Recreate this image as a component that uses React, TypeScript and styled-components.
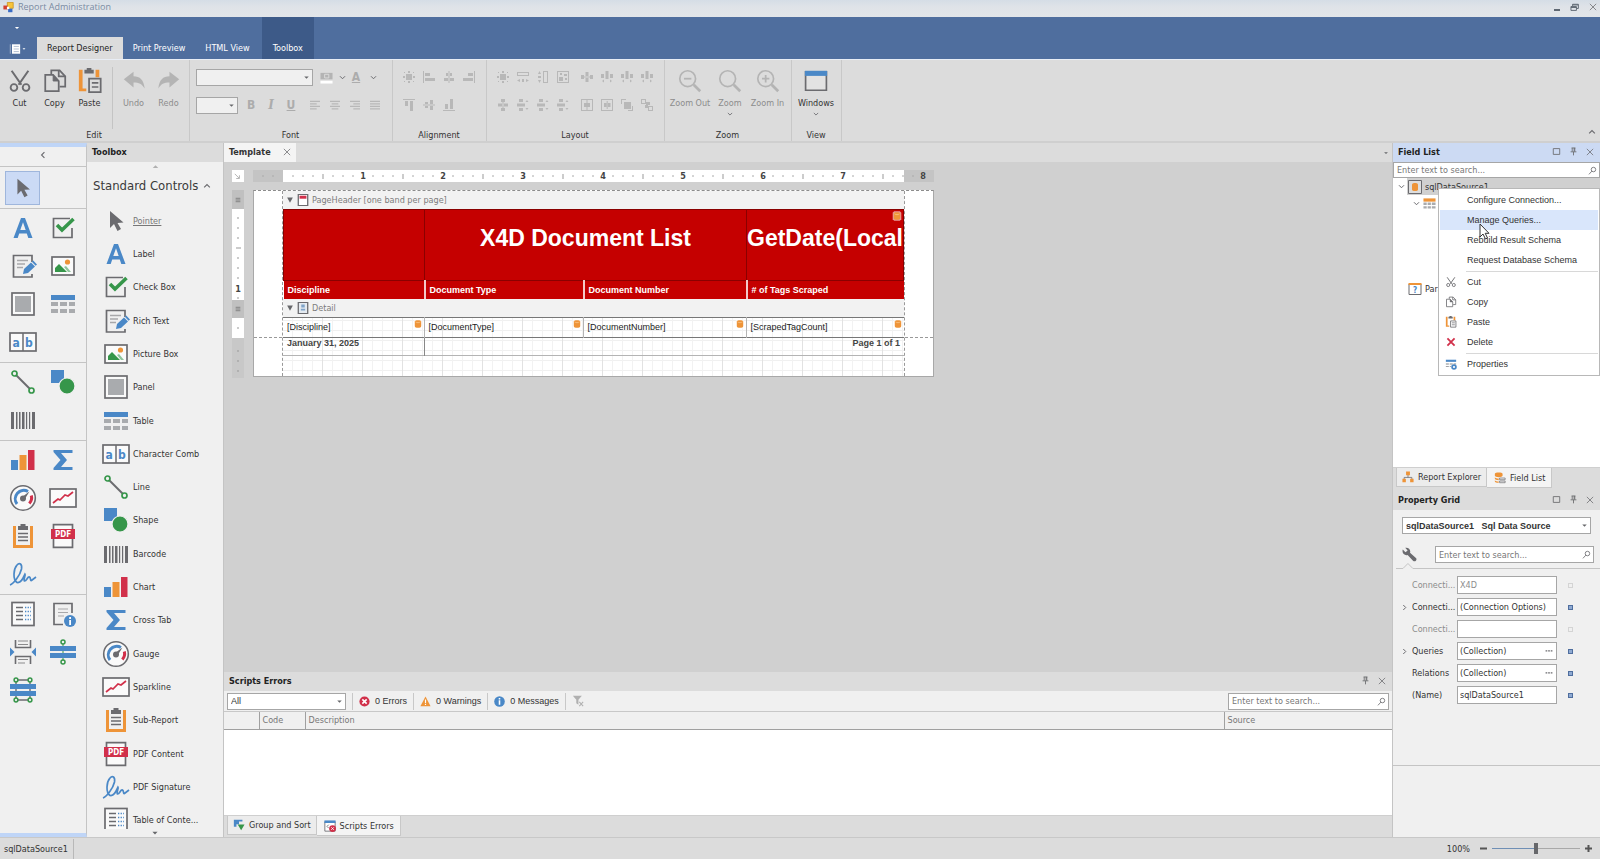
import React from 'react';
import styled, { createGlobalStyle, css } from 'styled-components';

const UI = `'DejaVu Sans Condensed', 'DejaVu Sans', sans-serif`;
const ARIAL = `'Liberation Sans', Arial, sans-serif`;
const GREY = '#6b6b6f';
const BLUE = '#4a88c7';
const GREEN = '#36964a';
const ORANGE = '#ee9438';
const RED = '#d1304a';

const Global = createGlobalStyle`
  *, *::before, *::after { box-sizing: border-box; }
  body { margin: 0; background: #dcdcdc; color: #333; font: 9px/12px ${UI}; overflow: hidden; }
  button, input, select { font: inherit; color: inherit; margin: 0; border-radius: 0; }
  button { background: none; border: 0; padding: 0; }
  svg { display: block; flex: none; }
  h1, h2, p { margin: 0; font: inherit; }
`;

/* ---------- icons ---------- */

const icons: Record<string, React.ReactNode> = {
  pointer: <path d="M8 4v17l4-4 3.500 7 3.500-2-3.500-6 6-.500z" fill={GREY} />,
  label: <path d="M4.500 24 12 4h4l7.500 20h-4.200l-1.500-4.500h-7.600L8.700 24zm6.800-8h5.400L14 8.200z" fill={BLUE} />,
  check: (
    <>
      <path d="M21 4.500H4.500v19H23V14" fill="none" stroke={GREY} strokeWidth="1.700" />
      <path d="m8 11 5 5L24.500 5" fill="none" stroke={GREEN} strokeWidth="3.600" />
    </>
  ),
  rich: (
    <>
      <path d="M23 10V3.500H4.500v21.500H23v-3" fill="none" stroke={GREY} strokeWidth="1.700" />
      <path d="M8 8.500h11M8 12h8M8 15.500h6" stroke="#a8a8aa" strokeWidth="1.300" />
      <path d="m14 22 1-5 7-6.500 4 4-7 6.500z" fill={BLUE} />
      <path d="m22.800 9.800 1.400-1.300 3.800 4-1.400 1.300z" fill={BLUE} />
    </>
  ),
  picture: (
    <>
      <rect x="3" y="5" width="22" height="18" fill="#fafafa" stroke={GREY} strokeWidth="1.700" />
      <path d="m6 20 0-4 4-4 8 8z" fill={GREEN} />
      <path d="m15 15 2-1 5 6h-3z" fill="#8dc49a" />
      <circle cx="18.500" cy="10" r="2.600" fill={ORANGE} />
    </>
  ),
  panel: (
    <>
      <rect x="3" y="3" width="22" height="22" fill="#fafafa" stroke={GREY} strokeWidth="1.700" />
      <rect x="6" y="6" width="16" height="16" fill="#a9abae" />
    </>
  ),
  table: (
    <>
      <path d="M2 5h24v5H2z" fill={BLUE} />
      <path d="M2 12h7v4H2zM11 12h7v4h-7zM20 12h6v4h-6zM2 19h7v4H2zM11 19h7v4h-7zM20 19h6v4h-6z" fill="#a9abae" />
    </>
  ),
  comb: (
    <>
      <rect x="1" y="5" width="26" height="18" fill="#fafafa" stroke={GREY} strokeWidth="1.700" />
      <path d="M14 5v18" stroke={GREY} strokeWidth="1.500" />
      <text x="3.500" y="19" fontSize="12" fontWeight="700" fontFamily={UI} fill={BLUE}>a</text>
      <text x="16" y="19" fontSize="12" fontWeight="700" fontFamily={UI} fill={BLUE}>b</text>
    </>
  ),
  line: (
    <>
      <path d="m6 6 16 16" stroke={GREY} strokeWidth="1.900" />
      <circle cx="5.500" cy="5.500" r="2.500" fill="#f0f0f0" stroke={GREEN} strokeWidth="1.700" />
      <circle cx="22.500" cy="22.500" r="2.500" fill="#f0f0f0" stroke={GREEN} strokeWidth="1.700" />
    </>
  ),
  shape: (
    <>
      <path d="M2 2h13v13H2z" fill={BLUE} />
      <circle cx="18" cy="18" r="8" fill={GREEN} stroke="#f0f0f0" strokeWidth="1.200" />
    </>
  ),
  barcode: <path d="M2 6h3v17H2zM7 6h1.500v17H7zM10 6h1.500v17H10zM13 6h2.500v17H13zM17 6h1.200v17H17zM20 6h1.200v17H20zM23 6h3v17h-3z" fill={GREY} />,
  chart: (
    <>
      <path d="M2 14h7v10H2z" fill={BLUE} />
      <path d="M10.500 9h7v15h-7z" fill={ORANGE} />
      <path d="M19 4h6.500v20H19z" fill={RED} />
    </>
  ),
  sigma: <path d="M4.500 4h19v3H12l6 7-6 7h11.500v3h-19v-2l7-8-7-8z" fill={BLUE} />,
  gauge: (
    <>
      <circle cx="14" cy="14" r="12.300" fill="#fafafa" stroke={GREY} strokeWidth="1.600" />
      <path d="M8 20a8.500 8.500 0 0 1 11-12.500" fill="none" stroke={BLUE} strokeWidth="3" />
      <path d="M22.300 11.500a8.500 8.500 0 0 1-2 8" fill="none" stroke={RED} strokeWidth="3" />
      <circle cx="14" cy="14.500" r="3" fill={GREY} />
      <path d="m13 13 7.500-5.500-5 8z" fill={GREY} />
    </>
  ),
  spark: (
    <>
      <rect x="1" y="5" width="26" height="18" fill="#fafafa" stroke={GREY} strokeWidth="1.700" />
      <path d="m4 19 5-4 2 1 5-5 3 1 5-4" fill="none" stroke={RED} strokeWidth="1.700" />
    </>
  ),
  sub: (
    <>
      <path d="M4 4h3v19h14V4h3v22H4z" fill={ORANGE} />
      <path d="M9 4h2.500V2h5v2H19v4H9z" fill={GREY} />
      <path d="M9 11.500h10M9 15h10M9 18.500h10" stroke={GREY} strokeWidth="1.400" />
    </>
  ),
  pdf: (
    <>
      <path d="M4.500 2.700h19v22.600h-19z" fill="#fafafa" stroke={GREY} strokeWidth="1.700" />
      <path d="M2 7h24v10H2z" fill={RED} />
      <text x="14" y="15" fontSize="8" fontWeight="700" fontFamily={UI} fill="#fff" textAnchor="middle">PDF</text>
    </>
  ),
  sign: <path d="M1 25c3-1 10-9 11.500-16 .8-5-2-7-4.500-4C4.500 9 3.500 19 8 22.500c4 1 6-4 8-8.500 1 1-2 6-.500 7 2 .500 3-5 5-4 1.500 1 .500 4 2 3.500L27 17" fill="none" stroke={BLUE} strokeWidth="1.700" />,
  toc: (
    <>
      <rect x="3" y="2.500" width="22" height="23" fill="#fafafa" stroke={GREY} strokeWidth="1.700" />
      <path d="M7 7.500h7M7 11.500h7M7 15.500h7M7 19.500h7" stroke={GREY} strokeWidth="1.600" />
      <path d="M16 7.500h6M16 11.500h6M16 15.500h6M16 19.500h6" stroke={BLUE} strokeWidth="1.300" strokeDasharray="1.300 1.300" />
    </>
  ),
  info: (
    <>
      <path d="M23 13V3.500H5v21h9" fill="none" stroke={GREY} strokeWidth="1.700" />
      <path d="M9 9h10M9 12.500h10M9 16h6" stroke="#a8a8aa" strokeWidth="1.200" />
      <circle cx="21" cy="21" r="6" fill={BLUE} />
      <path d="M20.200 17h1.800v2h-1.800zM20.200 20h1.800v5h-1.800z" fill="#fff" />
    </>
  ),
  pageBreak: (
    <>
      <path d="M6.500 2v7.500h15V2M6.500 26v-7.500h15V26" fill="none" stroke={GREY} strokeWidth="1.600" />
      <path d="M9 3h10M9 6.500h10M9 21.500h10M9 25h7" stroke="#8a8a8c" />
      <path d="m1 9.500 4.500 4.500L1 18.500zM27 9.500 22.500 14l4.500 4.500z" fill={BLUE} />
    </>
  ),
  crossLine: (
    <>
      <path d="M14 4v20" stroke={GREEN} />
      <path d="M1 8h26v5H1zM1 15h26v5H1z" fill={BLUE} />
      <circle cx="14" cy="4" r="2" fill="#f0f0f0" stroke={GREEN} strokeWidth="1.500" />
      <circle cx="14" cy="24" r="2" fill="#f0f0f0" stroke={GREEN} strokeWidth="1.500" />
    </>
  ),
  crossBox: (
    <>
      <path d="M7 4h14v20H7z" fill="none" stroke={GREY} strokeWidth="1.400" />
      <path d="M1 8h26v5H1zM1 15h26v5H1z" fill={BLUE} />
      {[[7, 4], [21, 4], [7, 24], [21, 24]].map(([x, y]) => (
        <circle key={`${x}-${y}`} cx={x} cy={y} r="1.900" fill="#f0f0f0" stroke={GREEN} strokeWidth="1.500" />
      ))}
    </>
  ),
  cut: (
    <>
      <path d="m5 3 10.500 15M23 3 12.500 18" stroke={GREY} strokeWidth="2.200" />
      <circle cx="7.500" cy="21" r="3.600" fill="none" stroke={GREY} strokeWidth="2" />
      <circle cx="20.500" cy="21" r="3.600" fill="none" stroke={GREY} strokeWidth="2" />
    </>
  ),
  copy: (
    <>
      <path d="M10 6.500V2.500h9L25 9v11h-6" fill="none" stroke={GREY} strokeWidth="1.900" />
      <path d="M18 2.500V9h7" fill="none" stroke={GREY} strokeWidth="1.900" />
      <path d="M3.500 7.500h8.500l6 6.500v11H3.500z" fill="none" stroke={GREY} strokeWidth="1.900" />
      <path d="M12 7.500V14h6z" fill={GREY} stroke={GREY} />
    </>
  ),
  paste: (
    <>
      <path d="M2 2h4v20h4v3H2zM20 2h4v8h-4z" fill={ORANGE} />
      <path d="M8 2h2.500V0h5v2H18v4H8z" fill={GREY} />
      <path d="M13 11.500h12.500V26H13z" fill="none" stroke={GREY} strokeWidth="1.900" />
      <path d="M16 16h7M16 20.500h7" stroke={GREY} strokeWidth="1.700" />
    </>
  ),
  undo: <path d="M3 12 13.500 4v5c7 0 11 4 12 13-3-5-6-6.500-12-6.500V21z" fill="#b4b4b4" />,
  redo: <path d="M25 12 14.500 4v5c-7 0-11 4-12 13 3-5 6-6.500 12-6.500V21z" fill="#b4b4b4" />,
  zoomOut: <ZoomGlass inner="M7.500 11.500h8" />,
  zoom: <ZoomGlass />,
  zoomIn: <ZoomGlass inner="M7.500 11.500h8M11.500 7.500v8" />,
  windows: (
    <>
      <path d="M2.800 4h22.400v20H2.800z" fill="#e2e2e2" stroke={GREY} strokeWidth="1.800" />
      <path d="M2 3h24v5.500H2z" fill={BLUE} />
    </>
  ),
  wrench: <path d="M1.500 4.500 6.500 10l4-3.500L6 1.500C11.500 0 17 5 15 10.500L26.500 21c2 3.500-2 7.500-5.500 5L10.500 15C5 17-1 11 1.500 4.500z" fill={GREY} />,
  search: <path d="M17 4a7 7 0 1 1 0 14 7 7 0 1 1 0-14M12 16 3 26" fill="none" stroke={GREY} strokeWidth="2.600" />,
  error: (
    <>
      <circle cx="14" cy="14" r="13" fill={RED} />
      <path d="m8.500 8.500 11 11m0-11-11 11" stroke="#fff" strokeWidth="4" />
    </>
  ),
  warning: (
    <>
      <path d="m14 1 13 25H1z" fill={ORANGE} />
      <path d="M12.500 9h3v9h-3zM12.500 20h3v3h-3z" fill="#fff" />
    </>
  ),
  message: (
    <>
      <circle cx="14" cy="14" r="13.500" fill={BLUE} />
      <path d="M12 5h4v4h-4zM12 11h4v11h-4z" fill="#fff" />
    </>
  ),
  filter: (
    <>
      <path d="M2 2h21l-8 9v12l-5-4v-8z" fill="#b0b0b0" />
      <path d="m17 16 9 10m0-10-9 10" stroke="#b0b0b0" strokeWidth="2.400" />
    </>
  ),
  delete: <path d="m4 4 20 20M24 4 4 24" stroke={RED} strokeWidth="5" />,
  properties: (
    <>
      <path d="M2 4h24v5H2z" fill={BLUE} />
      <path d="M2 13h7v2H2zM11 13h7v2h-7zM20 13h6v2h-6zM2 19h7v2H2zM11 19h3v2h-3z" fill="#85878a" />
      <circle cx="21" cy="21" r="4.500" fill="none" stroke={BLUE} strokeWidth="4" />
    </>
  ),
  explorer: (
    <>
      <path d="M14 9v6M5 20v-5h18v5" fill="none" stroke={GREY} strokeWidth="1.800" />
      <path d="M9.500 1h9v9h-9zM1 18h8v8H1zM19 18h8v8h-8z" fill={ORANGE} />
    </>
  ),
  fields: (
    <>
      <path d="M2 4c0-4 18-4 18 0v5c0 4-18 4-18 0zM2 12c2 3 5 3 9 3v4c-5 0-9-1-9-3zM2 19c2 3 5 3 9 3v3c-5 0-9-1-9-3z" fill={ORANGE} />
      <path d="M13 14h13v4H13zM13 21h13v4H13z" fill="#f0f0f0" stroke={GREY} strokeWidth="1.600" />
    </>
  ),
  group: (
    <>
      <path d="M2 2h20v4h-8v6H8v6H2z" fill={BLUE} />
      <path d="M11 13h16l-8 13z" fill={GREEN} />
    </>
  ),
  scripts: (
    <>
      <path d="M2 4h24v22H2z" fill="#fff" stroke={GREY} strokeWidth="2" />
      <path d="M1 1h26v6H1z" fill={BLUE} />
      <path d="m11 11-4 4 4 4" fill="none" stroke={GREY} strokeWidth="2" />
      <circle cx="20" cy="20" r="8" fill={RED} />
      <path d="m17 17 6 6m0-6-6 6" stroke="#fff" strokeWidth="2" />
    </>
  ),
  database: (
    <>
      <path d="M1 1h26v26H1z" fill="#dedede" stroke={GREY} strokeWidth="2" />
      <path d="M8 9c0-4 12-4 12 0v10c0 4-12 4-12 0z" fill={ORANGE} />
    </>
  ),
  query: (
    <>
      <path d="M1 3h26v7H1z" fill={ORANGE} />
      <path d="M1 12h7v5H1zM10 12h7v5h-7zM19 12h8v5h-8zM1 20h7v5H1zM10 20h7v5h-7zM19 20h8v5h-8z" fill="#a9abae" />
    </>
  ),
  parameter: (
    <>
      <path d="M2 4h24v21H2z" fill="#fff" stroke={GREY} strokeWidth="2" />
      <path d="M1 2h26v4H1z" fill={ORANGE} />
      <text x="14" y="22" fontSize="16" fontWeight="700" fontFamily={UI} fill={BLUE} textAnchor="middle">?</text>
    </>
  ),
  pageHeader: (
    <>
      <path d="M3 1h22v26H3z" fill="#fff" stroke={GREY} strokeWidth="3" />
      <path d="M6 4h16v7H6z" fill={RED} />
    </>
  ),
  detail: (
    <>
      <path d="M3 1h22v26H3z" fill="#e4eaf0" stroke={GREY} strokeWidth="3" />
      <path d="M10 6h8v7h-8zM9 16h10v4H9z" fill="#7fa3c8" />
    </>
  ),
  field: (
    <>
      <path d="M6 1h16l4 4v18l-4 4H6l-4-4V5z" fill="#fff" opacity=".6" />
      <path d="M5 7c0-5 18-5 18 0v13c0 6-18 6-18 0z" fill={ORANGE} />
      <path d="M7 8c3 3 11 3 14 0" stroke="#fbc98f" strokeWidth="2" fill="none" />
    </>
  ),
  app: (
    <>
      <path d="M7 3h19v22H7z" fill="#fff" />
      <path d="M3 3v22M11 8h12M11 14h12M11 20h12" fill="none" stroke="#a9b6cc" strokeWidth="2" />
    </>
  ),
  appLogo: (
    <>
      <path d="M11 1h15v15H11z" fill="#f7c33a" stroke="#c9931c" strokeWidth="2" />
      <path d="M1 9h11v10H1z" fill="#d2402f" />
      <path d="M13 17h11v9H13z" fill="#3a6cc4" />
      <path d="M10 12h6v6h-6z" fill="#fff" />
    </>
  ),
  restore: <path d="M8 9V4h18v13h-5M3 11h17v12H3zM3 14h17M8 6h18" fill="none" stroke="#5f6873" strokeWidth="3" />,
  close: <path d="m3 3 22 22M25 3 3 25" stroke="#66676a" strokeWidth="2.600" />,
  maximize: <path d="M4 5h20v18H4z" fill="none" stroke="#66676a" strokeWidth="2.600" />,
  pin: <path d="M8 3h12M10 3v11M18 3v11M16 3v11M5 15h18M14 15v11" fill="none" stroke="#66676a" strokeWidth="2.600" />,
  down: <path d="M5 10h18l-9 9z" fill="#66676a" />,
  triangle: <path d="M4 5h20L14 24z" fill="#66676a" />,
  chevDown: <path d="m4 9 10 10L24 9" fill="none" stroke={GREY} strokeWidth="4" />,
  chevUp: <path d="m4 19 10-10 10 10" fill="none" stroke={GREY} strokeWidth="4" />,
  chevLeft: <path d="m19 4-10 10 10 10" fill="none" stroke={GREY} strokeWidth="4" />,
  chevRight: <path d="m9 4 10 10L9 24" fill="none" stroke={GREY} strokeWidth="4" />,
  arrowUp: <path d="M3 20h22L14 9z" fill="#b0b0b0" />,
  whiteDown: <path d="M4 9h20L14 19z" fill="#fff" />,
  more: <path d="M2 11h6v5H2zM11 11h6v5h-6zM20 11h6v5h-6z" fill={GREY} />,
  corner: <path d="m5 8 12 12M18 12v9H9" fill="none" stroke="#b0b0b0" strokeWidth="2.600" />,
  menu: <path d="M3 6h22M3 14h22M3 22h22" stroke="#7a7a7a" strokeWidth="4" />,
  fill: (
    <>
      <path d="M1 4h26v14H1z" fill="#b4b4b4" />
      <path d="M10 7h9v8h-9z" fill="none" stroke="#ddd" strokeWidth="2" />
      <path d="M1 21h26v6H1z" fill="#fff" />
    </>
  ),
  // small greyed-out alignment and layout glyphs on a 12-unit grid
  aGrid: <Faded d="M3 3h6v6H3zM5 0h2v2H5zM5 10h2v2H5zM0 5h2v2H0zM10 5h2v2h-2zM1 1h1v1H1zM10 1h1v1h-1zM1 10h1v1H1zM10 10h1v1h-1z" />,
  aLeft: <Faded d="M0 0h1v12H0zM2 2h5v3H2zM2 7h10v3H2z" />,
  aCenter: <Faded d="M5.500 0h1v12h-1zM3 2h6v3H3zM1 7h10v3H1z" />,
  aRight: <Faded d="M11 0h1v12h-1zM5 2h5v3H5zM0 7h10v3H0z" />,
  aTop: <Faded d="M0 0h12v1H0zM2 2h3v5H2zM7 2h3v10H7z" />,
  aMiddle: <Faded d="M0 5.500h12v1H0zM2 3h3v6H2zM7 1h3v10H7z" />,
  aBottom: <Faded d="M0 11h12v1H0zM2 5h3v5H2zM7 0h3v10H7z" />,
  lWidth: <Faded d="M0 1h12v4H0zM1 2v2h10V2zM3 8l-3 1.500L3 11zM9 8l3 1.500L9 11zM5 8h2v3H5z" />,
  lHeight: <Faded d="M6 0h5v12H6zM7 1v10h3V1zM1 3l1.500-3L4 3zM1 9l1.500 3L4 9zM1 5h3v2H1z" />,
  lBoth: <Faded d="M0 0h12v12H0zM1 1v10h10V1zM2 6h4v4H2zM3 2h2v2H3zM8 7h2v2H8zM7 3h3v2H7z" />,
  lHEqual: <Faded d="M0 4h3v4H0zM4.500 1h3v10h-3zM9 4h3v4H9zM3 5.500h6v1H3z" />,
  lHArrow: <Faded d="M0 3h3v4H0zM4.500 0h3v8h-3zM9 3h3v4H9zM1 10l2-1.500v3zM11 10 9 8.500v3z" />,
  lVEqual: <Faded d="M4 0h4v3H4zM1 4.500h10v3H1zM4 9h4v3H4zM5.500 3h1v6h-1z" />,
  lVArrow: <Faded d="M2 0h4v3H2zM0 4.500h8v3H0zM2 9h4v3H2zM10 1l1.500 2h-3zM10 11 8.500 9h3z" />,
  lBoxH: <Faded d="M0 0h12v12H0zM1 1v10h10V1zM3 4h6v4H3zM5.500 1h1v3h-1zM5.500 8h1v3h-1z" />,
  lBoxV: <Faded d="M0 0h12v12H0zM1 1v10h10V1zM3 4h2.500v4H3zM7 4h2.500v4H7zM5.700 2h1v8h-1z" />,
  lFront: <Faded d="M3 3h7v7H3zM0 0h5v1H1v4H0zM12 12H7v-1h4V7h1z" />,
  lBack: <Faded d="M0 0h5v5H0zM1 1v3h3V1zM7 7h5v5H7zM8 8v3h3V8zM5 3h4v3H7v3H4V6h1z" />,
  tAlign: <Faded d="M0 1h12v1.300H0zM0 4h8v1.300H0zM0 7h12v1.300H0zM0 10h8v1.300H0z" />,
  tCenter: <Faded d="M0 1h12v1.300H0zM2 4h8v1.300H2zM0 7h12v1.300H0zM2 10h8v1.300H2z" />,
  tRight: <Faded d="M0 1h12v1.300H0zM4 4h8v1.300H4zM0 7h12v1.300H0zM4 10h8v1.300H4z" />,
  tJustify: <Faded d="M0 1h12v1.300H0zM0 4h12v1.300H0zM0 7h12v1.300H0zM0 10h12v1.300H0z" />,
};

function ZoomGlass({ inner }: { inner?: string }) {
  return (
    <g fill="none" stroke="#b4b4b4">
      <circle cx="11.500" cy="11.500" r="8.500" strokeWidth="1.800" />
      <path d="m18 18 7 7" strokeWidth="3" />
      {inner && <path d={inner} strokeWidth="1.900" />}
    </g>
  );
}

function Faded({ d }: { d: string }) {
  return <path d={d} transform="scale(2.333)" fill="#b8b8b8" fillRule="evenodd" />;
}

const Icon = ({ name, size = 28 }: { name: string; size?: number }) => (
  <svg width={size} height={size} viewBox="0 0 28 28" aria-hidden="true">
    {icons[name]}
  </svg>
);

/* ---------- window chrome ---------- */

const Window = styled.div`
  display: flex;
  flex-direction: column;
  height: 100vh;
  min-width: 1100px;
`;

const TitleBar = styled.header`
  display: flex;
  align-items: center;
  gap: 4px;
  height: 17px;
  padding: 0 3px 3px;
  background: linear-gradient(#d5dde6, #dfe3e8 40%, #e2e5e9);
  color: #7a8ba3;
  font-family: 'Open Sans', sans-serif;
`;

const WindowButtons = styled.div`
  display: flex;
  align-items: center;
  gap: 10px;
  margin-left: auto;
`;

const Minimize = styled.button`
  width: 6px;
  height: 8px;
  border-bottom: 2px solid #5f6873;
`;

const RibbonTabs = styled.nav`
  display: flex;
  align-items: flex-end;
  height: 42px;
  background: #4f6e9e;
`;

const AppMenu = styled.div`
  display: flex;
  flex-direction: column;
  justify-content: space-between;
  height: 100%;
  width: 37px;
  padding: 5px 0 4px 9px;
`;

const AppButton = styled.button`
  display: flex;
  align-items: center;
  gap: 1px;
  height: 12px;
`;

const Tab = styled.button<{ $active?: boolean; $context?: boolean }>`
  height: 22px;
  padding: 0 10px;
  color: #fff;
  ${(p) => p.$active && css`background: #dcdcdc; color: #222;`}
  ${(p) => p.$context && css`height: 42px; padding: 20px 11px 0; margin-left: 2px; background: #3d5a88;`}
`;

const Ribbon = styled.section`
  display: flex;
  height: 84px;
  background: #dcdcdc;
  border-top: 1px solid #e8edf5;
  border-bottom: 2px solid #cfcfcf;
`;

const RibbonGroup = styled.div`
  display: flex;
  flex-direction: column;
  justify-content: space-between;
  padding: 7px 3px 0 2px;
  border-right: 1px solid #c8c8c8;
`;

const GroupCaption = styled.p`
  text-align: center;
`;

const GroupBody = styled.div`
  display: flex;
`;

const Divider = styled.span`
  width: 1px;
  height: 62px;
  margin: 0 3px 0 5px;
  background: #c4c4c4;
`;

const BigButton = styled.button<{ $width?: number }>`
  display: flex;
  flex-direction: column;
  align-items: center;
  width: ${(p) => p.$width ?? 35}px;
  height: 54px;
  padding-top: 1px;
  & > span { margin: 3px 0 2px; }
  &:disabled { color: #8c8c8c; }
`;

const ToolGrid = styled.div`
  display: flex;
  flex-direction: column;
  gap: 8px;
  padding: 0 4px;
`;

const ToolRow = styled.div`
  display: flex;
  align-items: center;
  height: 20px;
`;

const Tool = styled.button<{ $mark?: 'b' | 'i' | 'u' | 'a' }>`
  display: grid;
  place-items: center;
  width: 20px;
  height: 20px;
  color: #acacac;
  font-size: 12px;
  ${(p) => p.$mark && css`font-weight: 700;`}
  ${(p) => p.$mark === 'i' && css`font-style: italic; font-family: 'DejaVu Serif', serif;`}
  ${(p) => (p.$mark === 'u' || p.$mark === 'a') && css`text-decoration: underline;`}
`;

const Spacer = styled.span<{ $width?: number }>`
  flex: none;
  width: ${(p) => p.$width ?? 4}px;
`;

const RibbonEnd = styled.div`
  display: flex;
  flex: 1;
  align-items: flex-end;
  justify-content: flex-end;
  padding: 5px 4px;
`;

/* ---------- shared controls ---------- */

const SelectBox = styled.div<{ $width?: number; $disabled?: boolean }>`
  position: relative;
  width: ${(p) => (p.$width ? `${p.$width}px` : 'auto')};
  height: 17px;
  & > select {
    display: block;
    appearance: none;
    width: 100%;
    height: 100%;
    padding: 0 3px;
    border: 1px solid #a6a6a6;
    background: ${(p) => (p.$disabled ? '#f0f0f0' : '#fff')};
    opacity: 1;
  }
  & > svg { position: absolute; right: 3px; top: 5px; }
`;

const SearchBox = styled.label<{ $tall?: boolean }>`
  display: flex;
  align-items: center;
  height: ${(p) => (p.$tall ? 17 : 16)}px;
  padding: 0 2px;
  border: 1px solid #a6a6a6;
  background: #fff;
  & > input {
    flex: 1;
    min-width: 0;
    padding: 0 1px;
    border: 0;
    outline: 0;
    background: none;
  }
  & > input::placeholder { color: #777; opacity: 1; }
`;

const Search = ({ label, tall }: { label: string; tall?: boolean }) => (
  <SearchBox $tall={tall}>
    <input placeholder="Enter text to search..." aria-label={label} />
    <Icon name="search" size={9} />
  </SearchBox>
);

const PanelHeader = styled.header<{ $active?: boolean }>`
  display: flex;
  align-items: center;
  flex: none;
  gap: 8px;
  height: 19px;
  padding: 0 6px 2px 5px;
  background: ${(p) => (p.$active ? '#ccdaf3' : '#dcdcdc')};
  color: #222;
  & > h2 { flex: 1; font-weight: 700; }
`;

const IconButton = styled.button`
  display: grid;
  place-items: center;
`;

const BottomTabs = styled.div<{ $tall?: boolean }>`
  display: flex;
  flex: none;
  height: ${(p) => (p.$tall ? 24 : 22)}px;
  padding: 0 3px;
  background: #dcdcdc;
  border-top: 1px solid #cfcfcf;
`;

const BottomTab = styled.button<{ $active?: boolean }>`
  display: flex;
  align-items: center;
  gap: 4px;
  height: ${(p) => (p.$active ? 20 : 19)}px;
  padding: ${(p) => (p.$active ? '0 6px 0 7px' : '0 5px')};
  background: ${(p) => (p.$active ? '#f4f4f4' : '#ececec')};
  border: 1px solid #c8c8c8;
  border-top: 0;
  border-left-width: ${(p) => (p.$active ? 0 : 1)}px;
`;

/* ---------- main areas ---------- */

const Body = styled.main`
  display: grid;
  flex: 1;
  min-height: 0;
  grid-template-columns: 87px 137px minmax(0, 1fr) 207px;
`;

const Strip = styled.aside`
  display: flex;
  flex-direction: column;
  background: #f0f0f0;
  border-top: 4px solid #bfd5f7;
  border-bottom: 4px solid #bfd5f7;
  border-right: 1px solid #c4c4c4;
`;

const StripToggle = styled.button`
  display: grid;
  place-items: center;
  height: 20px;
  padding-bottom: 4px;
  border-bottom: 1px solid #c4c4c4;
`;

const StripGroup = styled.div<{ $first?: boolean; $last?: boolean }>`
  display: grid;
  grid-template-columns: 40px 40px;
  grid-auto-rows: ${(p) => (p.$first ? 40 : 38)}px;
  padding: ${(p) => (p.$first ? '1px 3px 0' : '0 3px 1px')};
  border-bottom: ${(p) => (p.$last ? 0 : '1px solid #c4c4c4')};
`;

const StripButton = styled.button<{ $selected?: boolean }>`
  display: grid;
  place-items: center;
  ${(p) => p.$selected && css`
    align-self: center;
    margin: 0 3px 0 2px;
    height: 34px;
    background: #cbdaf5;
    border: 1px solid #9fb6dc;
  `}
`;

const ToolboxPanel = styled.aside`
  display: flex;
  flex-direction: column;
  min-height: 0;
  background: #f0f0f0;
  border-right: 1px solid #c4c4c4;
`;

const ScrollHint = styled.div<{ $bottom?: boolean }>`
  display: grid;
  place-items: center;
  flex: none;
  position: relative;
  height: 8px;
  margin-top: ${(p) => (p.$bottom ? -8 : 0)}px;
  background: #f0f0f0;
`;

const CategoryTitle = styled.button`
  display: flex;
  align-items: center;
  justify-content: space-between;
  flex: none;
  height: 34px;
  padding: 0 12px 3px 6px;
  color: #3a3a3a;
  font-size: 13px;
  line-height: 20px;
  white-space: nowrap;
`;

const ToolList = styled.ul`
  display: grid;
  flex: 1;
  grid-auto-rows: 1fr;
  min-height: 0;
  margin: 0;
  padding: 0;
  list-style: none;
`;

const ToolItem = styled.button<{ $current?: boolean }>`
  display: flex;
  align-items: center;
  gap: 3px;
  width: 100%;
  height: 100%;
  padding: 0 15px;
  ${(p) => p.$current && css`color: #777; text-decoration: underline;`}
`;

const Center = styled.section`
  display: flex;
  flex-direction: column;
  min-width: 0;
  min-height: 0;
  background: #d0d0d0;
  border-right: 1px solid #c4c4c4;
`;

const DocumentTabs = styled.div`
  display: flex;
  align-items: center;
  justify-content: space-between;
  flex: none;
  height: 19px;
  padding-right: 3px;
  background: #dcdcdc;
`;

const DocumentTab = styled.div`
  display: flex;
  align-items: center;
  gap: 9px;
  height: 19px;
  padding: 0 5px 2px;
  background: #f4f4f4;
  font-weight: 700;
  & > span { width: 45px; }
`;

const Designer = styled.div`
  display: grid;
  flex: 1;
  grid-template-columns: 13px 681px;
  grid-template-rows: 12px auto;
  gap: 8px;
  align-content: start;
  min-height: 0;
  padding: 8px 0 0 8px;
  overflow: hidden;
`;

const RulerCorner = styled.button`
  display: grid;
  place-items: center;
  width: 12px;
  height: 12px;
  background: #fff;
`;

const VerticalRuler = styled.div`
  display: flex;
  flex-direction: column;
`;

const RulerPart = styled.div<{ $height: number; $scale?: boolean; $cap?: boolean }>`
  display: grid;
  place-items: center;
  width: 12px;
  height: ${(p) => p.$height}px;
  background: ${(p) => (p.$scale ? '#fff' : p.$cap ? '#c0c0c0' : '#c8c8c8')};
`;

const Page = styled.article`
  display: grid;
  grid-template-columns: 28px 623px 1fr;
  height: 187px;
  background: #fff;
  border: 1px solid #a8a8a8;
  border-top-style: dashed;
  border-top-color: #8c8c8c;
`;

const Margin = styled.div`
  display: flex;
  flex-direction: column;
  &::before { content: ''; height: 147px; border-bottom: 1px dashed #999; }
`;

const Bands = styled.div`
  border-left: 1px dashed #999;
  border-right: 1px dashed #999;
  background:
    repeating-linear-gradient(90deg, transparent 0 39px, #e2e2e2 39px 40px),
    repeating-linear-gradient(90deg, transparent 0 9px, #f2f2f2 9px 10px),
    repeating-linear-gradient(transparent 0 9px, #f0f0f0 9px 10px);
`;

const BandHeader = styled.header`
  display: flex;
  align-items: center;
  gap: 3px;
  height: 18px;
  padding: 0 3px;
  background: #f2f2f2;
  color: #7c7c7c;
`;

const ReportTable = styled.table`
  width: 621px;
  table-layout: fixed;
  border-collapse: collapse;
  font-family: ${ARIAL};
`;

const ReportRow = styled.tr<{ $height: number; $kind: 'title' | 'head' | 'data' | 'foot' }>`
  height: ${(p) => p.$height}px;
  & > * { position: relative; padding: 0 4px; text-align: left; white-space: nowrap; overflow: hidden; }
  ${(p) => p.$kind === 'title' && css`
    background: #c50000;
    color: #fff;
    & > * { padding: 0 0 14px; font-size: 23px; line-height: 26px; text-align: center; border: 1px solid #8a0000; }
  `}
  ${(p) => p.$kind === 'head' && css`
    background: #c50000;
    color: #fff;
    & > * + * { border-left: 2px solid #f3c9c9; }
  `}
  ${(p) => p.$kind === 'data' && css`
    color: #222;
    border-top: 1px solid #777;
    border-bottom: 1px solid #777;
    & > * + * { border-left: 1px solid #b4b4b4; }
  `}
  ${(p) => p.$kind === 'foot' && css`
    color: #444;
    font-weight: 700;
    line-height: 10px;
    border-bottom: 1px solid #b4b4b4;
    & > * { vertical-align: top; }
    & > * + * { border-left: 1px solid #888; text-align: right; }
  `}
`;

const FieldBadge = styled.span`
  position: absolute;
  top: 1px;
  right: 1px;
`;

/* ---------- script errors ---------- */

const ErrorsPanel = styled.section`
  display: flex;
  flex-direction: column;
  flex: none;
  height: 165px;
`;

const ErrorsBar = styled.div`
  display: flex;
  align-items: center;
  flex: none;
  height: 21px;
  padding: 0 3px;
  background: #f0f0f0;
  border-bottom: 1px solid #c8c8c8;
  font-family: ${ARIAL};
  & > label { width: 161px; margin-left: auto; font-family: ${UI}; }
`;

const Counter = styled.button`
  display: flex;
  align-items: center;
  gap: 5px;
  height: 17px;
  padding: 0 6px;
  border-left: 1px solid #c8c8c8;
  &:first-of-type { margin-left: 6px; }
`;

const ErrorsBody = styled.div`
  flex: 1;
  background: #fff;
`;

const ErrorsTable = styled.table`
  width: 100%;
  table-layout: fixed;
  border-collapse: collapse;
  & th {
    height: 17px;
    padding: 0 3px;
    background: #f0f0f0;
    border-bottom: 1px solid #a0a0a0;
    color: #777;
    font-weight: 400;
    text-align: left;
  }
  & th + th { border-left: 1px solid #a0a0a0; }
`;

/* ---------- right side ---------- */

const Side = styled.aside`
  display: flex;
  flex-direction: column;
  position: relative;
  min-height: 0;
  background: #f0f0f0;
`;

const FieldList = styled.section`
  display: flex;
  flex-direction: column;
  flex: none;
  height: 324px;
  background: #fff;
`;

const Tree = styled.ul`
  margin: 0;
  padding: 0;
  list-style: none;
`;

const TreeItem = styled.li<{ $level: number; $selected?: boolean }>`
  display: flex;
  align-items: center;
  gap: 3px;
  height: 17px;
  padding-left: ${(p) => 5 + p.$level * 15}px;
  ${(p) => p.$selected && css`background: linear-gradient(90deg, #fff 14px, #d0d0d0 14px);`}
`;

const Menu = styled.menu`
  position: absolute;
  top: 45px;
  left: 45px;
  right: 0;
  margin: 0;
  padding: 1px;
  background: #fff;
  border: 1px solid #b8b8b8;
  font-family: ${ARIAL};
`;

const MenuItem = styled.button<{ $hover?: boolean }>`
  display: grid;
  grid-template-columns: 27px 1fr;
  align-items: center;
  width: 100%;
  height: 20px;
  text-align: left;
  background: ${(p) => (p.$hover ? '#d9e6fb' : 'none')};
  & > svg { justify-self: center; margin-right: 5px; }
  & > span { grid-column: 2; }
`;

const MenuRule = styled.hr`
  height: 1px;
  margin: 1px 0 0 26px;
  border: 0;
  background: #d8d8d8;
`;

const Cursor = styled.svg`
  position: absolute;
  top: 80px;
  left: 86px;
`;

const PropertyPanel = styled.section`
  display: flex;
  flex: 1;
  flex-direction: column;
`;

const PropertyTop = styled.div`
  display: flex;
  flex-direction: column;
  gap: 12px;
  padding: 7px 9px 5px;
  & select { font-family: ${ARIAL}; font-weight: 700; }
`;

const PropertySearch = styled.div`
  display: grid;
  grid-template-columns: 33px 1fr;
  align-items: center;
  margin-right: -3px;
`;

const Notch = styled.svg`
  width: 100%;
  height: 6px;
  margin-top: -5px;
`;

const PropertyList = styled.div`
  display: flex;
  flex: none;
  flex-direction: column;
  gap: 4px;
  height: 197px;
  padding-top: 7px;
  border-bottom: 1px solid #c4c4c4;
`;

const PropertyRow = styled.div<{ $off?: boolean }>`
  display: grid;
  grid-template-columns: 17px 43px 100px 1fr;
  align-items: center;
  gap: 0 2px;
  height: 18px;
  color: ${(p) => (p.$off ? '#8c8c8c' : '#333')};
  & > label { grid-column: 2; overflow: hidden; white-space: nowrap; }
  & > button:first-child { justify-self: end; margin-right: 2px; }
`;

const PropertyValue = styled.div`
  display: flex;
  align-items: center;
  height: 18px;
  padding-right: 3px;
  border: 1px solid #a6a6a6;
  background: #fff;
  & > input { flex: 1; min-width: 0; padding: 0 2px; border: 0; background: none; }
`;

const Marker = styled.span<{ $off?: boolean }>`
  width: 5px;
  height: 5px;
  margin-left: 9px;
  border: 1px solid ${(p) => (p.$off ? '#d4d4d4' : '#4f6e9e')};
  background: ${(p) => (p.$off ? 'none' : '#8faad2')};
`;

const StatusBar = styled.footer`
  display: flex;
  align-items: center;
  flex: none;
  height: 22px;
  border-top: 1px solid #c8c8c8;
  background: #dcdcdc;
  & > p { padding: 4px 5px 4px 4px; border-right: 1px solid #b8b8b8; }
`;

const ZoomBar = styled.div`
  display: flex;
  align-items: center;
  gap: 5px;
  margin-left: auto;
  padding-right: 8px;
  & > output { margin-right: 5px; }
`;

const ZoomStep = styled.button`
  display: grid;
  place-items: center;
`;

const Slider = styled.input`
  appearance: none;
  width: 88px;
  height: 12px;
  background: linear-gradient(90deg, #6f8fb5 50%, #a8a8a8 50%) center / 100% 1px no-repeat;
  &::-webkit-slider-thumb { appearance: none; width: 4px; height: 11px; background: #66676a; }
`;

/* ---------- data ---------- */

const stripGroups = [
  ['label', 'check', 'rich', 'picture', 'panel', 'table', 'comb'],
  ['line', 'shape', 'barcode'],
  ['chart', 'sigma', 'gauge', 'spark', 'sub', 'pdf', 'sign'],
  ['toc', 'info', 'pageBreak', 'crossLine', 'crossBox'],
];

const tools = [
  ['pointer', 'Pointer'], ['label', 'Label'], ['check', 'Check Box'], ['rich', 'Rich Text'],
  ['picture', 'Picture Box'], ['panel', 'Panel'], ['table', 'Table'], ['comb', 'Character Comb'],
  ['line', 'Line'], ['shape', 'Shape'], ['barcode', 'Barcode'], ['chart', 'Chart'],
  ['sigma', 'Cross Tab'], ['gauge', 'Gauge'], ['spark', 'Sparkline'], ['sub', 'Sub-Report'],
  ['pdf', 'PDF Content'], ['sign', 'PDF Signature'], ['toc', 'Table of Conte...'],
];

const alignRows = [['aGrid', 'aLeft', 'aCenter', 'aRight'], ['aTop', 'aMiddle', 'aBottom']];
const layoutRows = [
  ['aGrid', 'lWidth', 'lHeight', 'lBoth', '', 'lHEqual', 'lHArrow', 'lHArrow', 'lHArrow'],
  ['lVEqual', 'lVArrow', 'lVArrow', 'lVArrow', '', 'lBoxH', 'lBoxV', 'lFront', 'lBack'],
];

const properties = [
  { id: 'p1', label: 'Connecti...', value: 'X4D', off: true },
  { id: 'p2', label: 'Connecti...', value: '(Connection Options)', expand: true },
  { id: 'p3', label: 'Connecti...', value: '', off: true },
  { id: 'p4', label: 'Queries', value: '(Collection)', expand: true, more: true },
  { id: 'p5', label: 'Relations', value: '(Collection)', more: true },
  { id: 'p6', label: '(Name)', value: 'sqlDataSource1' },
];

const Column = styled.col<{ $width?: number }>`
  width: ${(p) => (p.$width ? `${p.$width}px` : 'auto')};
`;

const columns = (
  <colgroup>
    <Column $width={141} />
    <Column $width={159} />
    <Column $width={163} />
    <Column />
  </colgroup>
);

const IconTools = ({ rows }: { rows: string[][] }) => (
  <ToolGrid>
    {rows.map((row, r) => (
      <ToolRow key={r}>
        {row.map((name, i) => (name
          ? <Tool key={i} disabled aria-label={name}><Icon name={name} size={12} /></Tool>
          : <Spacer key={i} />))}
      </ToolRow>
    ))}
  </ToolGrid>
);

const HorizontalRuler = () => (
  <svg width="681" height="12" viewBox="0 0 681 12" fontFamily={UI} fontSize="9" fontWeight="700" textAnchor="middle">
    <path d="M0 0h30v12H0zM651 0h30v12h-30z" fill="#c4c4c4" />
    <path d="M30 0h621v12H30z" fill="#fff" />
    {Array.from({ length: 67 }, (_, i) => i - 2).map((i) => {
      const x = 30 + i * 10;
      if (i === 0) return null;
      if (i > 0 && i % 8 === 0) return <text key={i} x={x} y="9" fill="#444">{i / 8}</text>;
      return i > 0 && i % 4 === 0
        ? <path key={i} d={`M${x} 4v5`} stroke="#999" />
        : <path key={i} d={`M${x - 1} 6h2`} stroke="#aaa" />;
    })}
  </svg>
);

const Ticks = ({ count, first = 9 }: { count: number; first?: number }) => (
  <svg width="12" height={count * 10} viewBox={`0 0 12 ${count * 10}`} fontFamily={UI} fontSize="9" fontWeight="700" textAnchor="middle">
    {Array.from({ length: count }, (_, i) => {
      const y = first + i * 10 - 1;
      if (i === 7) return <text key={i} x="6" y={y + 4} fill="#444">1</text>;
      return <path key={i} d={i === 3 ? `M4 ${y}h5` : `M5 ${y}h2`} stroke="#999" />;
    })}
  </svg>
);

/* ---------- app ---------- */

export default function App() {
  return (
    <Window>
      <Global />
      <TitleBar>
        <Icon name="appLogo" size={11} />
        <h1>Report Administration</h1>
        <WindowButtons>
          <Minimize aria-label="Minimize" />
          <IconButton aria-label="Restore"><Icon name="restore" size={9} /></IconButton>
          <IconButton aria-label="Close"><Icon name="close" size={8} /></IconButton>
        </WindowButtons>
      </TitleBar>

      <RibbonTabs>
        <AppMenu>
          <AppButton aria-label="Customize quick access">
            <Spacer /><Icon name="whiteDown" size={6} />
          </AppButton>
          <AppButton aria-label="File">
            <Icon name="app" size={12} /><Icon name="whiteDown" size={4} />
          </AppButton>
        </AppMenu>
        <Tab $active>Report Designer</Tab>
        <Tab>Print Preview</Tab>
        <Tab>HTML View</Tab>
        <Tab $context>Toolbox</Tab>
      </RibbonTabs>

      <Ribbon>
        <RibbonGroup>
          <GroupBody>
            <BigButton><Icon name="cut" size={26} /><span>Cut</span></BigButton>
            <BigButton><Icon name="copy" size={26} /><span>Copy</span></BigButton>
            <BigButton><Icon name="paste" size={26} /><span>Paste</span></BigButton>
            <Divider />
            <BigButton disabled><Icon name="undo" size={26} /><span>Undo</span></BigButton>
            <BigButton disabled><Icon name="redo" size={26} /><span>Redo</span></BigButton>
          </GroupBody>
          <GroupCaption>Edit</GroupCaption>
        </RibbonGroup>
        <RibbonGroup>
          <ToolGrid>
            <ToolRow>
              <SelectBox $width={117} $disabled>
                <select disabled aria-label="Font name" />
                <Icon name="down" size={7} />
              </SelectBox>
              <Spacer $width={3} />
              <Tool disabled aria-label="Fill colour"><Icon name="fill" size={13} /></Tool>
              <Spacer $width={3} />
              <Icon name="chevDown" size={7} />
              <Tool disabled $mark="a">A</Tool>
              <Spacer />
              <Icon name="chevDown" size={7} />
            </ToolRow>
            <ToolRow>
              <SelectBox $width={42} $disabled>
                <select disabled aria-label="Font size" />
                <Icon name="down" size={7} />
              </SelectBox>
              <Spacer $width={3} />
              <Tool disabled $mark="b">B</Tool>
              <Tool disabled $mark="i">I</Tool>
              <Tool disabled $mark="u">U</Tool>
              <Spacer />
              <Tool disabled aria-label="Left"><Icon name="tAlign" size={10} /></Tool>
              <Tool disabled aria-label="Center"><Icon name="tCenter" size={10} /></Tool>
              <Tool disabled aria-label="Right"><Icon name="tRight" size={10} /></Tool>
              <Tool disabled aria-label="Justify"><Icon name="tJustify" size={10} /></Tool>
            </ToolRow>
          </ToolGrid>
          <GroupCaption>Font</GroupCaption>
        </RibbonGroup>
        <RibbonGroup>
          <IconTools rows={alignRows} />
          <GroupCaption>Alignment</GroupCaption>
        </RibbonGroup>
        <RibbonGroup>
          <IconTools rows={layoutRows} />
          <GroupCaption>Layout</GroupCaption>
        </RibbonGroup>
        <RibbonGroup>
          <GroupBody>
            <BigButton disabled $width={46}><Icon name="zoomOut" size={26} /><span>Zoom Out</span></BigButton>
            <BigButton disabled $width={34}><Icon name="zoom" size={26} /><span>Zoom</span><Icon name="chevDown" size={6} /></BigButton>
            <BigButton disabled $width={41}><Icon name="zoomIn" size={26} /><span>Zoom In</span></BigButton>
          </GroupBody>
          <GroupCaption>Zoom</GroupCaption>
        </RibbonGroup>
        <RibbonGroup>
          <BigButton $width={44}><Icon name="windows" size={26} /><span>Windows</span><Icon name="chevDown" size={6} /></BigButton>
          <GroupCaption>View</GroupCaption>
        </RibbonGroup>
        <RibbonEnd>
          <IconButton aria-label="Collapse ribbon"><Icon name="chevUp" size={8} /></IconButton>
        </RibbonEnd>
      </Ribbon>

      <Body>
        <Strip>
          <StripToggle aria-label="Collapse"><Icon name="chevLeft" size={8} /></StripToggle>
          <StripGroup $first>
            <StripButton $selected aria-label="Pointer"><Icon name="pointer" size={26} /></StripButton>
          </StripGroup>
          {stripGroups.map((group, g) => (
            <StripGroup key={g} $last={g === 3}>
              {group.map((name) => (
                <StripButton key={name} aria-label={name}><Icon name={name} /></StripButton>
              ))}
            </StripGroup>
          ))}
        </Strip>

        <ToolboxPanel>
          <PanelHeader><h2>Toolbox</h2></PanelHeader>
          <ScrollHint><Icon name="arrowUp" size={7} /></ScrollHint>
          <CategoryTitle><span>Standard Controls</span><Icon name="chevUp" size={8} /></CategoryTitle>
          <ToolList>
            {tools.map(([icon, label], i) => (
              <li key={label}>
                <ToolItem $current={i === 0}><Icon name={icon} />{label}</ToolItem>
              </li>
            ))}
          </ToolList>
          <ScrollHint $bottom><Icon name="down" size={8} /></ScrollHint>
        </ToolboxPanel>

        <Center>
          <DocumentTabs>
            <DocumentTab>
              <span>Template</span>
              <IconButton aria-label="Close template"><Icon name="close" size={8} /></IconButton>
            </DocumentTab>
            <IconButton aria-label="Open documents"><Icon name="down" size={6} /></IconButton>
          </DocumentTabs>
          <Designer>
            <RulerCorner aria-label="Select report"><Icon name="corner" size={10} /></RulerCorner>
            <HorizontalRuler />
            <VerticalRuler>
              <RulerPart $height={19} $cap><Icon name="menu" size={6} /></RulerPart>
              <RulerPart $height={91} $scale><Ticks count={9} /></RulerPart>
              <RulerPart $height={18} $cap><Icon name="menu" size={6} /></RulerPart>
              <RulerPart $height={20} $scale><Ticks count={1} first={6} /></RulerPart>
              <RulerPart $height={40}><Ticks count={3} /></RulerPart>
            </VerticalRuler>
            <Page>
              <Margin />
              <Bands>
                <BandHeader><Icon name="triangle" size={8} /><Icon name="pageHeader" size={12} />PageHeader [one band per page]</BandHeader>
                <ReportTable>
                  {columns}
                  <tbody>
                    <ReportRow $height={71} $kind="title">
                      <th /><th colSpan={2}>X4D Document List</th>
                      <th>GetDate(Local<FieldBadge><Icon name="field" size={10} /></FieldBadge></th>
                    </ReportRow>
                    <ReportRow $height={18} $kind="head">
                      <th>Discipline</th><th>Document Type</th><th>Document Number</th><th># of Tags Scraped</th>
                    </ReportRow>
                  </tbody>
                </ReportTable>
                <BandHeader><Icon name="triangle" size={8} /><Icon name="detail" size={12} />Detail</BandHeader>
                <ReportTable>
                  {columns}
                  <tbody>
                    <ReportRow $height={20} $kind="data">
                      {['[Discipline]', '[DocumentType]', '[DocumentNumber]', '[ScrapedTagCount]'].map((field) => (
                        <td key={field}>{field}<FieldBadge><Icon name="field" size={10} /></FieldBadge></td>
                      ))}
                    </ReportRow>
                    <ReportRow $height={18} $kind="foot">
                      <td>January 31, 2025</td><td colSpan={3}>Page 1 of 1</td>
                    </ReportRow>
                  </tbody>
                </ReportTable>
              </Bands>
              <Margin />
            </Page>
          </Designer>

          <ErrorsPanel>
            <PanelHeader>
              <h2>Scripts Errors</h2>
              <IconButton aria-label="Pin"><Icon name="pin" size={9} /></IconButton>
              <IconButton aria-label="Close"><Icon name="close" size={8} /></IconButton>
            </PanelHeader>
            <ErrorsBar>
              <SelectBox $width={119}>
                <select aria-label="Filter"><option>All</option></select>
                <Icon name="down" size={7} />
              </SelectBox>
              <Counter><Icon name="error" size={11} />0 Errors</Counter>
              <Counter><Icon name="warning" size={11} />0 Warnings</Counter>
              <Counter><Icon name="message" size={11} />0 Messages</Counter>
              <Counter disabled aria-label="Clear filter"><Icon name="filter" size={12} /></Counter>
              <Search label="Search errors" tall />
            </ErrorsBar>
            <ErrorsBody>
              <ErrorsTable>
                <colgroup>
                  <Column $width={35} />
                  <Column $width={46} />
                  <Column />
                  <Column $width={168} />
                </colgroup>
                <thead><tr><th /><th>Code</th><th>Description</th><th>Source</th></tr></thead>
              </ErrorsTable>
            </ErrorsBody>
            <BottomTabs>
              <BottomTab><Icon name="group" size={12} />Group and Sort</BottomTab>
              <BottomTab $active><Icon name="scripts" size={12} />Scripts Errors</BottomTab>
            </BottomTabs>
          </ErrorsPanel>
        </Center>

        <Side>
          <FieldList>
            <PanelHeader $active>
              <h2>Field List</h2>
              <IconButton aria-label="Maximize"><Icon name="maximize" size={9} /></IconButton>
              <IconButton aria-label="Pin"><Icon name="pin" size={9} /></IconButton>
              <IconButton aria-label="Close"><Icon name="close" size={8} /></IconButton>
            </PanelHeader>
            <Search label="Search fields" />
            <Tree>
              <TreeItem $level={0} $selected><Icon name="chevDown" size={7} /><Icon name="database" size={14} />sqlDataSource1</TreeItem>
              <TreeItem $level={1}><Icon name="chevDown" size={7} /><Icon name="query" size={13} /></TreeItem>
              {[0, 1, 2, 3].map((i) => <TreeItem key={i} $level={2} />)}
              <TreeItem $level={0}><Spacer $width={7} /><Icon name="parameter" size={14} />Parameters</TreeItem>
            </Tree>
          </FieldList>
          <BottomTabs $tall>
            <BottomTab><Icon name="explorer" size={12} />Report Explorer</BottomTab>
            <BottomTab $active><Icon name="fields" size={12} />Field List</BottomTab>
          </BottomTabs>

          <PropertyPanel>
            <PanelHeader>
              <h2>Property Grid</h2>
              <IconButton aria-label="Maximize"><Icon name="maximize" size={9} /></IconButton>
              <IconButton aria-label="Pin"><Icon name="pin" size={9} /></IconButton>
              <IconButton aria-label="Close"><Icon name="close" size={8} /></IconButton>
            </PanelHeader>
            <PropertyTop>
              <SelectBox>
                <select aria-label="Component"><option>sqlDataSource1 &nbsp; Sql Data Source</option></select>
                <Icon name="down" size={7} />
              </SelectBox>
              <PropertySearch>
                <Icon name="wrench" size={15} />
                <Search label="Search properties" tall />
              </PropertySearch>
            </PropertyTop>
            <Notch viewBox="0 0 208 6" preserveAspectRatio="none" aria-hidden="true">
              <path d="M3 5.500h7l5-5 5 5h188" fill="none" stroke="#c4c4c4" />
            </Notch>
            <PropertyList>
              {properties.map((p) => (
                <PropertyRow key={p.id} $off={p.off}>
                  {p.expand && <IconButton aria-label="Expand"><Icon name="chevRight" size={7} /></IconButton>}
                  <label htmlFor={p.id}>{p.label}</label>
                  <PropertyValue>
                    <input id={p.id} defaultValue={p.value} />
                    {p.more && <IconButton aria-label="Edit"><Icon name="more" size={8} /></IconButton>}
                  </PropertyValue>
                  <Marker $off={p.off} />
                </PropertyRow>
              ))}
            </PropertyList>
          </PropertyPanel>

          <Menu>
            <MenuItem><span>Configure Connection...</span></MenuItem>
            <MenuItem $hover><span>Manage Queries...</span></MenuItem>
            <MenuItem><span>Rebuild Result Schema</span></MenuItem>
            <MenuItem><span>Request Database Schema</span></MenuItem>
            <MenuRule />
            <MenuItem><Icon name="cut" size={12} /><span>Cut</span></MenuItem>
            <MenuItem><Icon name="copy" size={12} /><span>Copy</span></MenuItem>
            <MenuItem><Icon name="paste" size={12} /><span>Paste</span></MenuItem>
            <MenuItem><Icon name="delete" size={10} /><span>Delete</span></MenuItem>
            <MenuRule />
            <MenuItem><Icon name="properties" size={12} /><span>Properties</span></MenuItem>
          </Menu>
          <Cursor width="11" height="17" viewBox="0 0 11 17" aria-hidden="true">
            <path d="M1 1v13l3-3 2.500 5 2-1-2.300-4.700H10z" fill="#fff" stroke="#333" />
          </Cursor>
        </Side>
      </Body>

      <StatusBar>
        <p>sqlDataSource1</p>
        <ZoomBar>
          <output htmlFor="zoom">100%</output>
          <ZoomStep aria-label="Zoom out"><svg width="7" height="7"><path d="M0 3.500h7" stroke="#555" strokeWidth="2" /></svg></ZoomStep>
          <Slider id="zoom" type="range" min="0" max="200" defaultValue="100" aria-label="Zoom" />
          <ZoomStep aria-label="Zoom in"><svg width="7" height="7"><path d="M0 3.500h7M3.500 0v7" stroke="#555" strokeWidth="2" /></svg></ZoomStep>
        </ZoomBar>
      </StatusBar>
    </Window>
  );
}
